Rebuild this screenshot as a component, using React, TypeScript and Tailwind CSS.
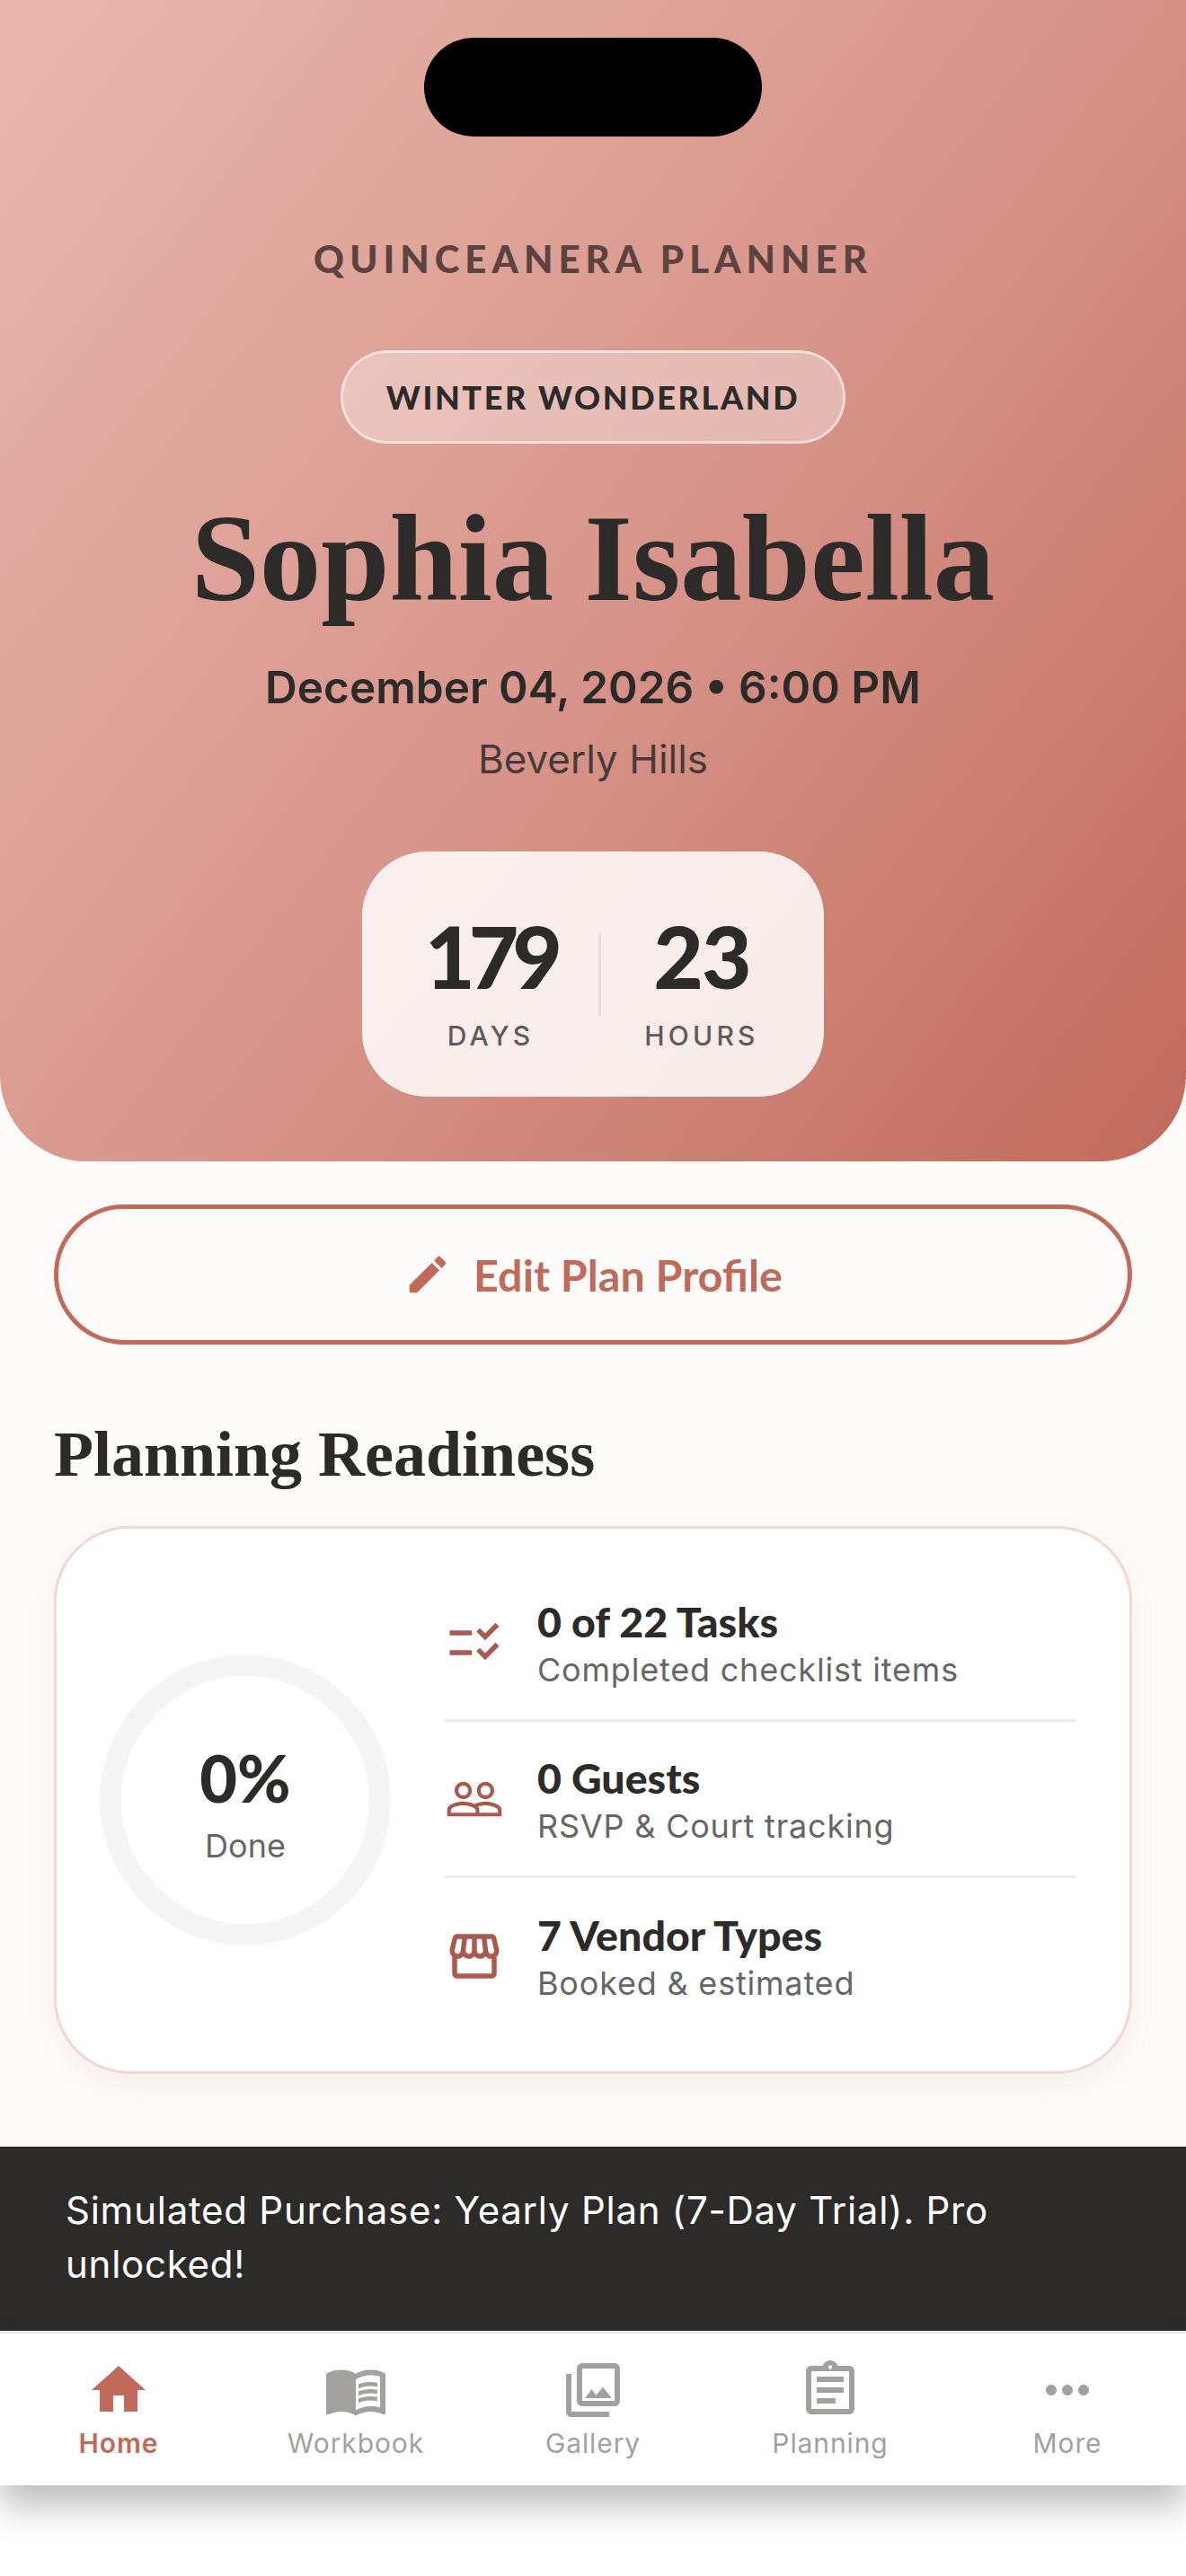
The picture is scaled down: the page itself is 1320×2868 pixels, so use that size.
import type { ReactNode } from "react";
import { MdChecklistRtl, MdEdit, MdHome, MdMenuBook, MdMoreHoriz, MdOutlineAssignment, MdOutlinePhotoLibrary, MdOutlineStorefront, MdPeopleOutline } from "react-icons/md";

const stats: { icon: ReactNode; title: string; sub: string }[] = [
  { icon: <MdChecklistRtl size={66} />, title: "0 of 22 Tasks", sub: "Completed checklist items" },
  { icon: <MdPeopleOutline size={66} />, title: "0 Guests", sub: "RSVP & Court tracking" },
  { icon: <MdOutlineStorefront size={66} />, title: "7 Vendor Types", sub: "Booked & estimated" },
];

const tabs: { icon: ReactNode; label: string; active?: boolean }[] = [
  { icon: <MdHome size={72} />, label: "Home", active: true },
  { icon: <MdMenuBook size={72} />, label: "Workbook" },
  { icon: <MdOutlinePhotoLibrary size={72} />, label: "Gallery" },
  { icon: <MdOutlineAssignment size={72} />, label: "Planning" },
  { icon: <MdMoreHoriz size={72} />, label: "More" },
];

function App() {
  return (
    <div className="flex h-[2868px] w-[1320px] flex-col overflow-hidden bg-white font-['Inter',sans-serif] text-[#2d2b2a]">
      <main className="h-[2390px] shrink-0 overflow-hidden bg-[#fdfbf9]">
        {/* hero */}
        <header className="relative flex h-[1293px] flex-col items-center rounded-b-[96px] bg-[linear-gradient(128deg,#e9b8ae_0%,#d8958b_52%,#c06a5c_100%)] pt-[264px]">
          <div className="absolute left-[472px] top-[42px] h-[110px] w-[376px] rounded-[55px] bg-black" />
          <p className="font-['Lato',sans-serif] text-[42px] font-black leading-[48px] tracking-[6px] text-[#5c4340]">QUINCEANERA PLANNER</p>
          <div className="mt-[78px] flex h-[104px] w-[562px] items-center justify-center rounded-full border-[3px] border-white/50 bg-white/35">
            <span className="font-['Lato',sans-serif] text-[36px] font-black tracking-[2.6px]">WINTER WONDERLAND</span>
          </div>
          <h1 className="mt-[56px] font-['Liberation_Serif',serif] text-[137px] font-bold leading-[144px]">Sophia Isabella</h1>
          <p className="mt-[41px] text-[49.5px] font-semibold leading-[60px]">December 04, 2026 • 6:00 PM</p>
          <p className="mt-[23px] text-[44px] leading-[54px] text-[#2d2b2a]/85">Beverly Hills</p>
          <div className="mt-[76px] flex h-[273px] w-[514px] items-center gap-[50px] rounded-[72px] bg-white/85 px-[73px]">
            <div className="flex w-[140px] flex-col items-center pt-[10px]">
              <span className="font-['Lato',sans-serif] text-[96px] font-black leading-[110px] tracking-[-7px]">179</span>
              <span className="mt-[16px] text-[30px] font-medium leading-[36px] tracking-[4.2px] text-[#615a58]">DAYS</span>
            </div>
            <div className="h-[92px] w-[3px] shrink-0 bg-[#e6dedc]" />
            <div className="flex w-[124px] flex-col items-center pt-[10px]">
              <span className="font-['Lato',sans-serif] text-[96px] font-black leading-[110px] tracking-[-2px]">23</span>
              <span className="mt-[16px] text-[30px] font-medium leading-[36px] tracking-[4.2px] text-[#615a58]">HOURS</span>
            </div>
          </div>
        </header>

        <div className="px-[60px]">
          <button className="mt-[48px] flex h-[156px] w-full items-center justify-center gap-[24px] rounded-full border-[5px] border-[#c06a5c] font-['Lato',sans-serif] text-[48.5px] font-bold text-[#c06a5c]">
            <MdEdit size={54} />
            Edit Plan Profile
          </button>

          <h2 className="mt-[80px] font-['Liberation_Serif',serif] text-[72px] font-bold leading-[84px]">Planning Readiness</h2>

          {/* readiness card */}
          <section className="mt-[38px] flex h-[610px] items-center gap-[60px] rounded-[84px] border-[3px] border-[#f2d8d3] bg-white pl-[48px] pr-[60px] shadow-[0_12px_36px_rgba(192,106,92,0.08)]">
            <div className="flex h-[324px] w-[324px] shrink-0 flex-col items-center justify-center rounded-full border-[24px] border-[#f5f5f5] pt-[8px]">
              <span className="font-['Lato',sans-serif] text-[72px] font-black leading-[84px]">0%</span>
              <span className="mt-[10px] text-[36px] leading-[48px] text-[#666]">Done</span>
            </div>
            <div className="flex-1">
              {stats.map((s, i) => (
                <div key={s.title} className={`flex h-[174px] items-center gap-[37px] ${i < 2 ? "border-b-[3px] border-[#ebebeb]" : ""}`}>
                  <span className="text-[#a85a4f]">{s.icon}</span>
                  <div>
                    <p className="font-['Lato',sans-serif] text-[46.5px] font-black leading-[60px]">{s.title}</p>
                    <p className="text-[36px] leading-[48px] tracking-[0.8px] text-[#666]">{s.sub}</p>
                  </div>
                </div>
              ))}
            </div>
          </section>
        </div>
      </main>

      <div className="h-[205px] shrink-0 bg-[#2d2b2a] px-[73px] pt-[41px] text-[42px] leading-[60px] tracking-[0.75px] text-white">
        Simulated Purchase: Yearly Plan (7-Day Trial). Pro unlocked!
      </div>

      <nav className="grid h-[172px] shrink-0 grid-cols-5 border-t-[3px] border-[#e8e6e3] bg-white pt-[27px] shadow-[0_24px_36px_rgba(0,0,0,0.25)]">
        {tabs.map((t) => (
          <div key={t.label} className={`flex flex-col items-center ${t.active ? "text-[#c06a5c]" : "text-[#a3a1a0]"}`}>
            {t.icon}
            <span className={`mt-[5px] text-[30px] leading-[36px] tracking-[0.9px] ${t.active ? "font-semibold" : ""}`}>{t.label}</span>
          </div>
        ))}
      </nav>
    </div>
  );
}

export default App;
